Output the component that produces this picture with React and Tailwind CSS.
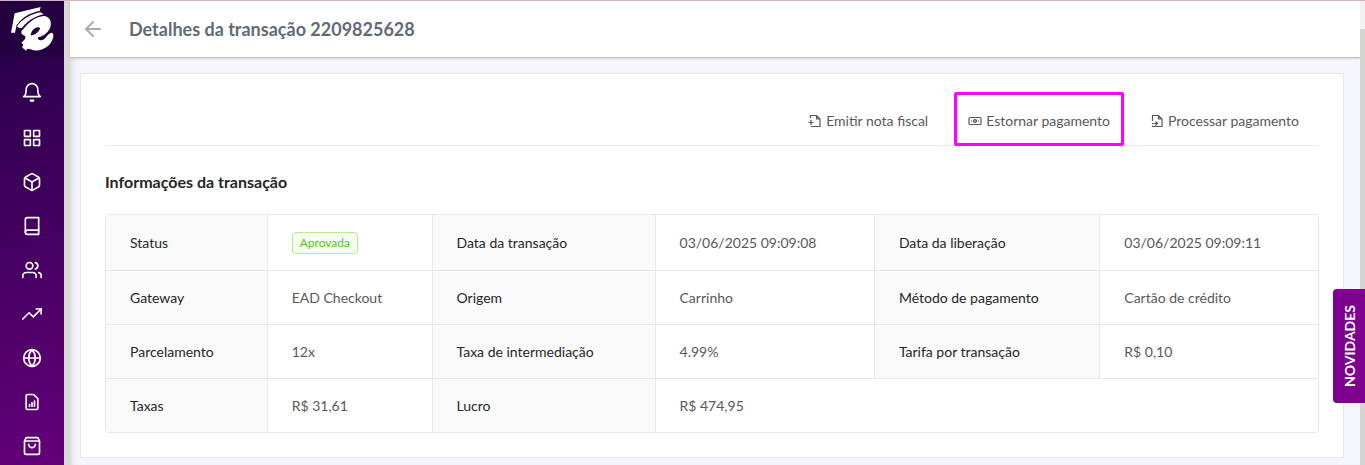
import { FiGrid, FiBox, FiBook, FiUsers, FiTrendingUp, FiGlobe, FiArrowLeft } from "react-icons/fi";

const line = {
  viewBox: "0 0 24 24",
  fill: "none",
  stroke: "currentColor",
  strokeWidth: 2,
  strokeLinecap: "round",
  strokeLinejoin: "round",
  "aria-hidden": true,
};

function Logo() {
  return (
    <svg viewBox="0 3 192 168" className="h-14 w-16" fill="#fff" aria-hidden="true">
      <path d="M33 98 44 40 122 21 119 33C96 37 74 48 60 63L53 72 50 74 45 98Z" />
      <path d="M51 79C66 58 92 42 122 37L131 43C108 48 84 60 66 84L58 84Z" />
      <path
        fillRule="evenodd"
        d="M70 88C88 62 112 49 134 48C154 52 157 74 147 90C139 102 126 110 114 112C112 122 124 124 134 116C142 106 148 98 156 98C164 102 160 120 148 134C132 150 108 156 92 148L82 146 78 152 66 142 70 134 64 128C72 122 78 116 76 109L65 102C62 96 65 90 70 88ZM92 106C104 106 120 94 120 84C114 77 94 86 92 106Z"
      />
    </svg>
  );
}

function Bell() {
  return (
    <svg {...line} className="size-5">
      <path d="M2 17.500h20c-2.500-1-3-3-3-8.500A7 7 0 0 0 5 9c0 5.500-.5 7.500-3 8.500z" />
      <path d="M10 22a2.500 2.500 0 0 0 4 0z" />
    </svg>
  );
}

function Report() {
  return (
    <svg {...line} className="size-5">
      <path d="M14 3H6.500A1.500 1.500 0 0 0 5 4.500v15A1.500 1.500 0 0 0 6.500 21h11a1.500 1.500 0 0 0 1.500-1.500V8zM9 17v-2M12 17v-4M15 17v-6" />
    </svg>
  );
}

function Bag() {
  return (
    <svg {...line} className="size-5">
      <path d="M3 6 5 2h14l2 4v14a2 2 0 0 1-2 2H5a2 2 0 0 1-2-2zM3 6h18M16 10a4 4 0 0 1-8 0" />
    </svg>
  );
}

function FilePlus() {
  return (
    <svg viewBox="0 0 14 16" fill="none" stroke="currentColor" strokeWidth="1.200" className="h-4 w-3.5" aria-hidden="true">
      <path d="M2.500 5V2.500H8.500L12 6V13.500H3M8.500 2.500V6H12M.500 9.500H5.500M3 7V12" />
    </svg>
  );
}

function Cash() {
  return (
    <svg viewBox="0 0 14 16" fill="none" stroke="currentColor" strokeWidth="1.200" className="h-4 w-3.5" aria-hidden="true">
      <rect x="1" y="4.500" width="12" height="7" rx="1" />
      <circle cx="7" cy="8" r="1.500" fill="currentColor" fillOpacity=".5" />
      <path d="M3 8h1M10 8h1" />
    </svg>
  );
}

function FileArrow() {
  return (
    <svg viewBox="0 0 14 16" fill="none" stroke="currentColor" strokeWidth="1.200" className="h-4 w-3.5" aria-hidden="true">
      <path d="M2.500 8V2.500H8.500L12 6V13.500H2.500V12.500M8.500 2.500V6H12M2 10.500H7.500M5.500 8.500 7.500 10.500 5.500 12.500" />
    </svg>
  );
}

const nav = [
  ["Notificações", Bell],
  ["Painel", FiGrid],
  ["Produtos", FiBox],
  ["Cursos", FiBook],
  ["Alunos", FiUsers],
  ["Vendas", FiTrendingUp],
  ["Site", FiGlobe],
  ["Relatórios", Report],
  ["Loja", Bag],
];

const rows = [
  [["Status", <span className="inline-block rounded border border-[#b7eb8f] bg-[#f6ffed] px-[7px] text-xs leading-5 text-[#52c41a]">Aprovada</span>], ["Data da transação", "03/06/2025 09:09:08"], ["Data da liberação", "03/06/2025 09:09:11"]],
  [["Gateway", "EAD Checkout"], ["Origem", "Carrinho"], ["Método de pagamento", "Cartão de crédito"]],
  [["Parcelamento", "12x"], ["Taxa de intermediação", "4.99%"], ["Tarifa por transação", "R$ 0,10"]],
  [["Taxas", "R$ 31,61"], ["Lucro", "R$ 474,95"]],
];

function Action({ icon: Icon, children, marked }) {
  return (
    <button type="button" className={"flex h-[54px] items-center gap-1 rounded-xs border-3 px-[11px] pt-1 " + (marked ? "border-[#ff00ff]" : "border-transparent")}>
      <Icon />
      {children}
    </button>
  );
}

export default function App() {
  return (
    <div className="flex h-screen overflow-hidden border-t border-[#cdb4c0] bg-[#f4f6fb] font-['Lato',sans-serif] text-sm text-[#595959]">
      <aside className="flex w-16 shrink-0 flex-col overflow-hidden bg-[linear-gradient(160deg,#240046,#64007a)] text-white">
        <a href="#" aria-label="Início" className="flex h-14 shrink-0 items-center justify-center bg-[#240040]"><Logo /></a>
        <nav className="flex flex-col pt-[13px]">
          {nav.map(([label, Icon]) => (
            <a key={label} href="#" aria-label={label} className="flex h-11 shrink-0 items-center justify-center first:mb-0.5">
              <Icon className="size-5" />
            </a>
          ))}
        </nav>
      </aside>
      <div className="w-1.5 shrink-0 bg-[#d9d9d6]" />
      <div className="flex min-w-0 flex-1 flex-col shadow-[inset_6px_0_6px_-4px_rgba(0,0,0,0.12)]">
        <header className="flex h-[57px] shrink-0 items-center gap-6 border-b border-[#bfbfbb] bg-white px-[11px] shadow-sm">
          <button type="button" aria-label="Voltar" className="text-[#a3adb8]"><FiArrowLeft className="size-6" /></button>
          <h1 className="text-lg font-bold text-[#5f6b76]">Detalhes da transação 2209825628</h1>
        </header>
        <main className="px-2.5 pt-[15px] pr-4">
          <section className="border border-[#e8e8e8] bg-white px-6 pt-[18px] pb-6">
            <div className="flex h-[54px] justify-end gap-3 border-b border-[#e8e8e8] pr-1.5">
              <Action icon={FilePlus}>Emitir nota fiscal</Action>
              <Action icon={Cash} marked>Estornar pagamento</Action>
              <Action icon={FileArrow}>Processar pagamento</Action>
            </div>
            <h2 className="pt-6 pb-5 text-base font-bold text-[#262626]">Informações da transação</h2>
            <div className="overflow-hidden rounded border border-[#e8e8e8]">
              <table className="w-full table-fixed border-collapse">
                <colgroup>
                  <col className="w-[13.300%]" /><col className="w-[13.600%]" /><col className="w-[18.400%]" />
                  <col className="w-[18.100%]" /><col className="w-[18.600%]" /><col />
                </colgroup>
                <tbody>
                  {rows.map((row, r) => (
                    <tr key={r} className="h-[54px] border-b border-[#e8e8e8] first:h-[55px] last:border-b-0">
                      {row.map(([label, value], i) => [
                        <th key={label} scope="row" className="border-r border-[#e8e8e8] bg-[#fafafa] px-6 pt-0.5 text-left font-normal text-[#262626]">{label}</th>,
                        <td key={label + "v"} colSpan={row.length === 2 && i === 1 ? 3 : 1} className="border-r border-[#e8e8e8] px-6 pt-0.5 last:border-r-0">{value}</td>,
                      ])}
                    </tr>
                  ))}
                </tbody>
              </table>
            </div>
          </section>
        </main>
      </div>
      <div className="w-[5px] shrink-0 bg-[#f1f1f1] pt-7"><div className="h-full bg-[#d4d4d2]" /></div>
      <button type="button" className="absolute top-[289px] right-0 flex h-[114px] w-8 items-center justify-center rounded-l bg-[#7d008f] pl-0.5 font-bold text-white">
        <span className="rotate-180 [writing-mode:vertical-rl]">NOVIDADES</span>
      </button>
    </div>
  );
}
